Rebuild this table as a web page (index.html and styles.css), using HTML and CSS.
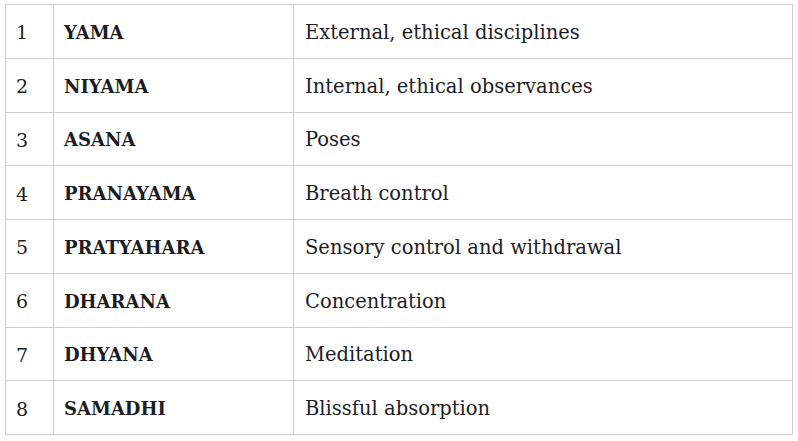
FILE: index.html
```html
<!DOCTYPE html>
<html>
<head>
<meta charset="utf-8">
<link rel="stylesheet" href="styles.css">
</head>
<body>
<div class="wrap">
<table class="limbs">
<colgroup><col class="c1"><col class="c2"><col class="c3"></colgroup>
<tbody>
<tr><td>1</td><td class="name">YAMA</td><td class="desc">External, ethical disciplines</td></tr>
<tr><td>2</td><td class="name">NIYAMA</td><td class="desc">Internal, ethical observances</td></tr>
<tr><td>3</td><td class="name">ASANA</td><td class="desc">Poses</td></tr>
<tr><td>4</td><td class="name">PRANAYAMA</td><td class="desc">Breath control</td></tr>
<tr><td>5</td><td class="name">PRATYAHARA</td><td class="desc">Sensory control and withdrawal</td></tr>
<tr><td>6</td><td class="name">DHARANA</td><td class="desc">Concentration</td></tr>
<tr><td>7</td><td class="name">DHYANA</td><td class="desc">Meditation</td></tr>
<tr><td>8</td><td class="name">SAMADHI</td><td class="desc">Blissful absorption</td></tr>
</tbody>
</table>
</div>
</body>
</html>
```

FILE: styles.css
```css
html, body {
  margin: 0;
  padding: 0;
  background: #ffffff;
}
.wrap {
  padding: 4px 0 0 5px;
}
.limbs {
  border-collapse: collapse;
  width: 787px;
  table-layout: fixed;
  font-family: "DejaVu Serif", "Liberation Serif", serif;
  font-size: 19px;
  color: #1c1c24;
}
.c1 { width: 48px; }
.c2 { width: 240px; }
.c3 { width: 499px; }
.limbs td {
  border: 1px solid #cfcfd2;
  height: 53.75px;
  padding: 2px 10px 0;
  vertical-align: middle;
  box-sizing: border-box;
}
.limbs .name {
  font-weight: bold;
  font-size: 18px;
}
.limbs .desc {
  font-size: 19.5px;
  padding-left: 11px;
}
```
